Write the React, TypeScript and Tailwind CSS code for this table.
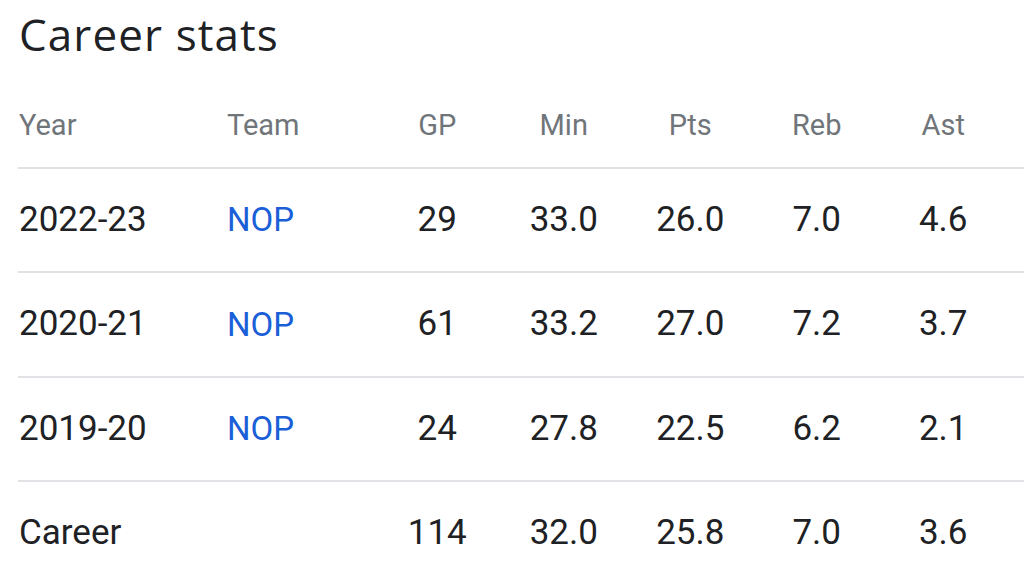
import React from 'react';

const rows = [
  { year: '2022-23', team: 'NOP', gp: '29', min: '33.0', pts: '26.0', reb: '7.0', ast: '4.6' },
  { year: '2020-21', team: 'NOP', gp: '61', min: '33.2', pts: '27.0', reb: '7.2', ast: '3.7' },
  { year: '2019-20', team: 'NOP', gp: '24', min: '27.8', pts: '22.5', reb: '6.2', ast: '2.1' },
  { year: 'Career', team: '', gp: '114', min: '32.0', pts: '25.8', reb: '7.0', ast: '3.6' },
];

const cols = 'grid grid-cols-[209px_147px_126.5px_126.5px_126.5px_126.5px_126.5px]';

export default function App() {
  return (
    <div className="h-[566px] overflow-hidden bg-white pl-[18px] font-['Roboto','Liberation_Sans',sans-serif]">
      <div className="flex h-[68px] items-center pl-[1px]">
        <h1 className="text-[44px] leading-none text-[#202124] font-['Open_Sans','Roboto',sans-serif] tracking-[1.1px]">Career stats</h1>
      </div>
      <div className={`${cols} h-[99px] items-center pt-[17px] text-[29px] text-[#70757a]`}>
        <div className="pl-[1px]">Year</div>
        <div className="pl-[-1px]">Team</div>
        <div className="text-center">GP</div>
        <div className="text-center">Min</div>
        <div className="text-center">Pts</div>
        <div className="text-center">Reb</div>
        <div className="text-center">Ast</div>
      </div>
      {rows.map((r) => (
        <div key={r.year} className={`${cols} h-[104.4px] items-center border-t-2 border-[#e0e2e6] text-[35px] text-[#202124]`}>
          <div className="pl-[1px]">{r.year}</div>
          <div className="text-[33px] text-[#1a5fd8]">{r.team}</div>
          <div className="text-center">{r.gp}</div>
          <div className="text-center">{r.min}</div>
          <div className="text-center">{r.pts}</div>
          <div className="text-center">{r.reb}</div>
          <div className="text-center">{r.ast}</div>
        </div>
      ))}
    </div>
  );
}
